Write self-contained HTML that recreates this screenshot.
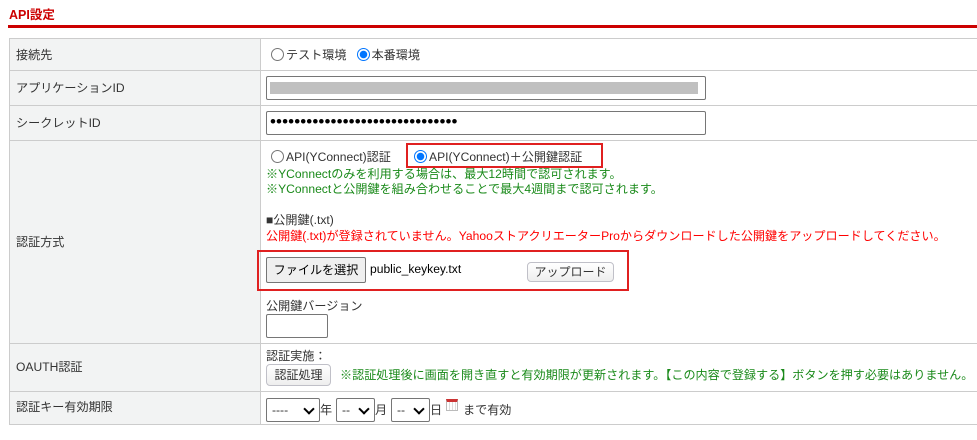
<!DOCTYPE html>
<html><head><meta charset="utf-8"><style>
*{margin:0;padding:0;box-sizing:border-box}
body{width:977px;height:440px;background:#fff;font-family:"Liberation Sans","Noto Sans CJK JP",sans-serif;font-size:12.1px;color:#333;position:relative;overflow:hidden}
.a{position:absolute;white-space:nowrap}
.lab{position:absolute;left:9px;width:251px;background:#f2f3f3;border-left:1px solid #ccc}
.h{position:absolute;left:9px;right:0;height:1px;background:#ccc}
.inp{position:absolute;border:1px solid #767676;border-radius:2px;background:#fff}
.rad{display:inline-block;width:13px;height:13px;border:1px solid #767676;border-radius:50%;vertical-align:-2px;margin-right:2px;background:#fff}
.rad.on{border:1px solid #0075ff;background:radial-gradient(circle,#0075ff 0 3.5px,#fff 4px)}
.g{color:#1a8a1a}.r{color:#f00}
.btn{position:absolute;border:1px solid #c0c0c8;border-radius:4px;background:linear-gradient(#fff,#eee);font-size:12px;text-align:center}
.sel{position:absolute;top:398px;height:24px;border:1px solid #767676;border-radius:2px;background:#fff;padding-left:5px;line-height:22px}
.sel:after{content:"";position:absolute;right:6px;top:6px;width:6px;height:6px;border-right:2px solid #000;border-bottom:2px solid #000;transform:rotate(45deg)}
</style></head><body>
<div class="a" style="left:9px;top:4px;color:#c00;font-weight:bold;font-size:12.5px">API設定</div>
<div class="a" style="left:8px;top:25px;width:969px;height:3px;background:#c00"></div>
<div class="lab" style="top:38px;height:386px"></div>
<div class="a" style="left:260px;top:38px;width:1px;height:386px;background:#ccc"></div>
<div class="h" style="top:38px"></div><div class="h" style="top:70px"></div><div class="h" style="top:105px"></div><div class="h" style="top:140px"></div><div class="h" style="top:343px"></div><div class="h" style="top:391px"></div><div class="h" style="top:424px"></div>
<div class="a" style="left:16px;top:46px">接続先</div>
<div class="a" style="left:16px;top:79px">アプリケーションID</div>
<div class="a" style="left:16px;top:114px">シークレットID</div>
<div class="a" style="left:16px;top:233px">認証方式</div>
<div class="a" style="left:16px;top:358px">OAUTH認証</div>
<div class="a" style="left:16px;top:398px">認証キー有効期限</div>
<div class="a" style="left:271px;top:46px"><span class="rad"></span>テスト環境 &nbsp;&nbsp;<span class="rad on"></span>本番環境</div>
<div class="inp" style="left:266px;top:76px;width:440px;height:24px"><div style="position:absolute;left:3px;top:5px;width:428px;height:12px;background:#c0c0c0"></div></div>
<div class="inp" style="left:266px;top:111px;width:440px;height:24px"><div class="a" style="left:3px;top:0px;font-size:17px;letter-spacing:0.1px;color:#000">•••••••••••••••••••••••••••••••</div></div>
<div class="a" style="left:271px;top:148px"><span class="rad"></span>API(YConnect)認証</div>
<div class="a" style="left:406px;top:143px;width:197px;height:25px;border:2px solid #e02020"></div>
<div class="a" style="left:414px;top:148px"><span class="rad on"></span>API(YConnect)＋公開鍵認証</div>
<div class="a g" style="left:266px;top:165px">※YConnectのみを利用する場合は、最大12時間で認可されます。</div>
<div class="a g" style="left:266px;top:180px">※YConnectと公開鍵を組み合わせることで最大4週間まで認可されます。</div>
<div class="a" style="left:266px;top:211px">■公開鍵(.txt)</div>
<div class="a r" style="left:266px;top:227px">公開鍵(.txt)が登録されていません。YahooストアクリエーターProからダウンロードした公開鍵をアップロードしてください。</div>
<div class="a" style="left:257px;top:250px;width:372px;height:41px;border:2px solid #e02020"></div>
<div class="a" style="left:266px;top:257px;width:100px;height:26px;border:1px solid #767676;border-radius:2px;background:#efefef;text-align:center;line-height:24px;color:#000">ファイルを選択</div>
<div class="a" style="left:370px;top:262px;color:#000">public_keykey.txt</div>
<div class="btn" style="left:527px;top:262px;width:87px;height:20px;line-height:18px">アップロード</div>
<div class="a" style="left:266px;top:297px">公開鍵バージョン</div>
<div class="inp" style="left:266px;top:314px;width:62px;height:24px"></div>
<div class="a" style="left:266px;top:347px">認証実施：</div>
<div class="btn" style="left:266px;top:364px;width:65px;height:22px;line-height:20px">認証処理</div>
<div class="a g" style="left:340px;top:366px">※認証処理後に画面を開き直すと有効期限が更新されます。【この内容で登録する】ボタンを押す必要はありません。</div>
<div class="sel" style="left:266px;width:54px">----</div><div class="a" style="left:320px;top:401px">年</div>
<div class="sel" style="left:336px;width:39px">--</div><div class="a" style="left:375px;top:401px">月</div>
<div class="sel" style="left:391px;width:39px">--</div><div class="a" style="left:430px;top:401px">日</div>
<div class="a" style="left:446px;top:399px;width:12px;height:12px;border:1px solid #bbb;border-top:3px solid #c33;background:repeating-linear-gradient(90deg,#fff 0 2px,#ddd 2px 3px)"></div>
<div class="a" style="left:463px;top:401px">まで有効</div>
</body></html>
